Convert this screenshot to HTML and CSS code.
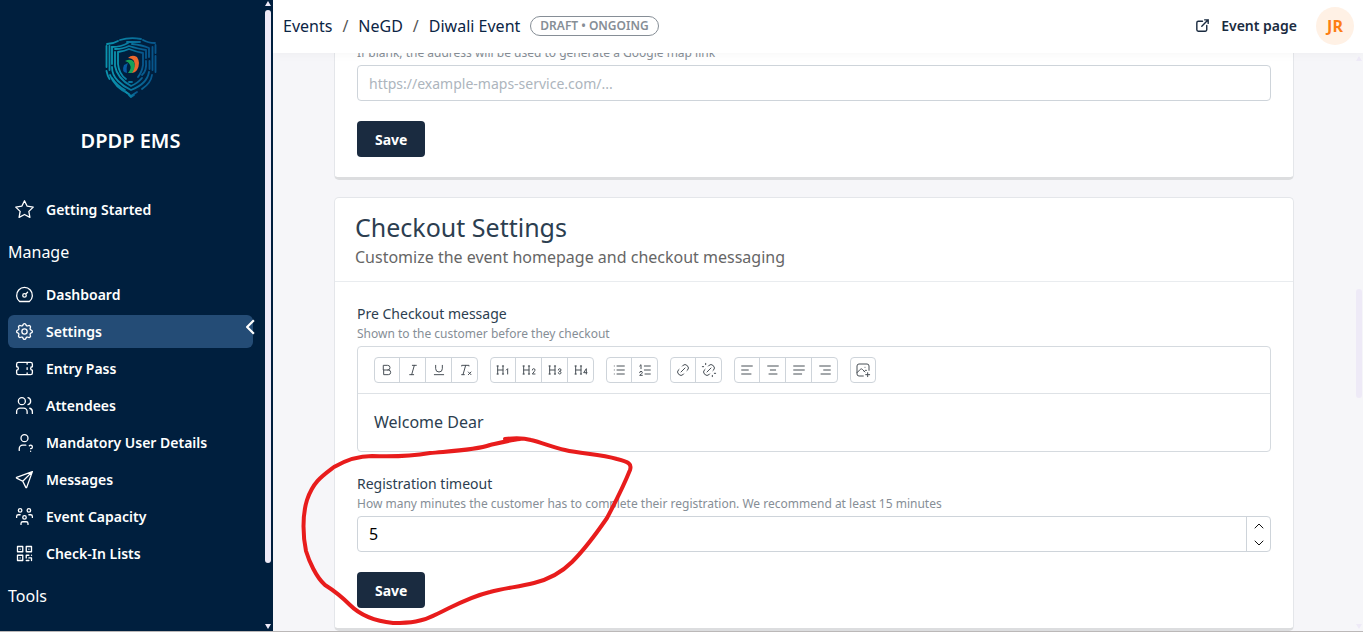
FILE: index.html
```html
<!DOCTYPE html>
<html lang="en">
<head>
<meta charset="utf-8">
<title>DPDP EMS – Event settings</title>
<link rel="stylesheet" href="styles.css">
</head>
<body>
<div class="app">
  <aside class="sidebar">
    <div class="sidebar-inner">
      <div class="brand">
        <svg class="brand-logo" viewBox="0 0 52 62" fill="none" stroke-linecap="round">
          <defs><linearGradient id="shield" x1="0" x2="1" y1="0" y2="0"><stop offset="0" stop-color="#0b93ae"/><stop offset="1" stop-color="#07568c"/></linearGradient></defs>
          <g stroke="url(#shield)" stroke-width="1.8">
            <path d="M15 3q10-3 21-1M22 5h13M38 3q5 3 12 3M2 7q6 0 11-3"/>
            <path d="M1.500 9v21M1.500 34q1 5 3 8M50.500 8v8M50.500 19v16M4.500 9v24"/>
            <path d="M5 38q5 13 19 19M7 41q5 8 13 12M37 52q9-6 10-14"/>
            <path d="M7 10v17M7 30q0 8 6 14 6 6 13 9 16-6 18-18M47.500 10v23"/>
            <path d="M7 10q9 0 16-4M27 7q10 1 17 4v9M44.500 24v8"/>
            <path d="M10 12q8 0 14-3 10 3 17 4v8M10 15v14q2 12 16 20 7-3 11-8M41 24q1 10-4 14"/>
            <path d="M13 15q7-1 11-3 8 3 14 4v12q-1 7-5 12M13 15v12q1 10 8 15M24 45h3"/>
            <path d="M21 55l5 4 6-4M24 58l2 2 3-2"/>
          </g>
          <path d="M23 21q4-4 9-1 4 6 0 13-2 3-6 3 5-6 3-12-2-3-6-3z" fill="#ed672d"/>
          <path d="M20 24q6-3 9 1 2 6-2 11l-4 0q4-5 2-8-1-3-5-4z" fill="#17a05a"/>
          <path d="M19 28l4-2q-2 4-1 10-6-1-3-8z" fill="#075aa3"/>
        </svg>
        <div class="brand-name">DPDP EMS</div>
      </div>
      <nav class="nav">
        <a class="nav-link nav-link-first" href="#start"><svg class="icon" viewBox="0 0 24 24"><path d="M12 17.750l-6.172 3.245l1.179 -6.873l-5 -4.867l6.900 -1l3.086 -6.253l3.086 6.253l6.900 1l-5 4.867l1.179 6.873z"/></svg>Getting Started</a>
        <h2 class="nav-heading">Manage</h2>
        <a class="nav-link" href="#dashboard"><svg class="icon" viewBox="0 0 24 24"><path d="M12 13m-2 0a2 2 0 1 0 4 0a2 2 0 1 0 -4 0M13.450 11.550l2.050 -2.050M6.400 20a9 9 0 1 1 11.200 0z"/></svg>Dashboard</a>
        <a class="nav-link nav-link-active" href="#settings"><svg class="icon" viewBox="0 0 24 24"><path d="M10.325 4.317c.426 -1.756 2.924 -1.756 3.350 0a1.724 1.724 0 0 0 2.573 1.066c1.543 -.940 3.310 .826 2.370 2.370a1.724 1.724 0 0 0 1.065 2.572c1.756 .426 1.756 2.924 0 3.350a1.724 1.724 0 0 0 -1.066 2.573c.940 1.543 -.826 3.310 -2.370 2.370a1.724 1.724 0 0 0 -2.572 1.065c-.426 1.756 -2.924 1.756 -3.350 0a1.724 1.724 0 0 0 -2.573 -1.066c-1.543 .940 -3.310 -.826 -2.370 -2.370a1.724 1.724 0 0 0 -1.065 -2.572c-1.756 -.426 -1.756 -2.924 0 -3.350a1.724 1.724 0 0 0 1.066 -2.573c-.940 -1.543 .826 -3.310 2.370 -2.370c1 .608 2.296 .070 2.572 -1.065zM9 12a3 3 0 1 0 6 0a3 3 0 0 0 -6 0"/></svg>Settings</a>
        <a class="nav-link" href="#pass"><svg class="icon" viewBox="0 0 24 24"><path d="M15 5v2M15 11v2M15 17v2M5 5h14a2 2 0 0 1 2 2v3a2 2 0 0 0 0 4v3a2 2 0 0 1 -2 2h-14a2 2 0 0 1 -2 -2v-3a2 2 0 0 0 0 -4v-3a2 2 0 0 1 2 -2"/></svg>Entry Pass</a>
        <a class="nav-link" href="#attendees"><svg class="icon" viewBox="0 0 24 24"><path d="M5 7a4 4 0 1 0 8 0a4 4 0 1 0 -8 0M3 21v-2a4 4 0 0 1 4 -4h4a4 4 0 0 1 4 4v2M16 3.130a4 4 0 0 1 0 7.750M21 21v-2a4 4 0 0 0 -3 -3.850"/></svg>Attendees</a>
        <a class="nav-link" href="#details"><svg class="icon" viewBox="0 0 24 24"><path d="M8 7a4 4 0 1 0 8 0a4 4 0 0 0 -8 0M6 21v-2a4 4 0 0 1 4 -4h3.500M19 22v.010M19 19a2.003 2.003 0 0 0 .914 -3.782a1.980 1.980 0 0 0 -2.414 .483"/></svg>Mandatory User Details</a>
        <a class="nav-link" href="#messages"><svg class="icon" viewBox="0 0 24 24"><path d="M10 14l11 -11M21 3l-6.500 18a.550 .550 0 0 1 -1 0l-3.500 -7l-7 -3.500a.550 .550 0 0 1 0 -1l18 -6.500"/></svg>Messages</a>
        <a class="nav-link" href="#capacity"><svg class="icon" viewBox="0 0 24 24"><path d="M10 13a2 2 0 1 0 4 0a2 2 0 0 0 -4 0M8 21v-1a2 2 0 0 1 2 -2h4a2 2 0 0 1 2 2v1M15 5a2 2 0 1 0 4 0a2 2 0 0 0 -4 0M17 10h2a2 2 0 0 1 2 2v1M5 5a2 2 0 1 0 4 0a2 2 0 0 0 -4 0M3 13v-1a2 2 0 0 1 2 -2h2"/></svg>Event Capacity</a>
        <a class="nav-link" href="#checkin"><svg class="icon" viewBox="0 0 24 24"><path d="M4 4h6v6h-6zM7 17v.010M14 4h6v6h-6zM7 7v.010M4 14h6v6h-6zM17 7v.010M14 14h3M20 14v.010M14 14v3M14 20h3M17 17h3M20 17v3"/></svg>Check-In Lists</a>
        <h2 class="nav-heading">Tools</h2>
      </nav>
      <button class="collapse" type="button" aria-label="Collapse sidebar"><svg viewBox="0 0 8 14"><path d="M7 1L1 7l6 6"/></svg></button>
    </div>
    <div class="rail" aria-hidden="true"><i class="rail-up"></i><i class="rail-thumb"></i><i class="rail-down"></i></div>
  </aside>

  <div class="page">
    <header class="topbar">
      <nav class="crumbs" aria-label="Breadcrumb">
        <a href="#events">Events</a><span>/</span><a href="#negd">NeGD</a><span>/</span><a href="#diwali">Diwali Event</a>
        <button class="status" type="button">DRAFT • ONGOING</button>
      </nav>
      <div class="account">
        <a class="event-link" href="#page"><svg class="icon" viewBox="0 0 24 24"><path d="M12 6h-6a2 2 0 0 0 -2 2v10a2 2 0 0 0 2 2h10a2 2 0 0 0 2 -2v-6M11 13l9 -9M15 4h5v5"/></svg>Event page</a>
        <button class="avatar" type="button">JR</button>
      </div>
    </header>

    <main class="content">
      <form class="card">
        <div class="card-body">
          <label class="hint" for="maps">If blank, the address will be used to generate a Google map link</label>
          <input class="field" id="maps" type="url" placeholder="https://example-maps-service.com/...">
          <button class="save" type="button">Save</button>
        </div>
      </form>

      <form class="card">
        <div class="card-head">
          <h1>Checkout Settings</h1>
          <p>Customize the event homepage and checkout messaging</p>
        </div>
        <div class="card-body">
          <div class="label" id="pre">Pre Checkout message</div>
          <div class="hint">Shown to the customer before they checkout</div>
          <div class="editor">
            <div class="toolbar">
              <div class="tools">
                <button type="button" aria-label="Bold"><svg viewBox="0 0 24 24"><path d="M7 5h6a3.500 3.500 0 0 1 0 7h-6zM13 12h1a3.500 3.500 0 0 1 0 7h-7v-7"/></svg></button>
                <button type="button" aria-label="Italic"><svg viewBox="0 0 24 24"><path d="M11 5h6M7 19h6M14 5l-4 14"/></svg></button>
                <button type="button" aria-label="Underline"><svg viewBox="0 0 24 24"><path d="M7 5v5a5 5 0 0 0 10 0v-5M5 19h14"/></svg></button>
                <button type="button" aria-label="Clear formatting"><svg viewBox="0 0 24 24"><path d="M17 15l4 4m0 -4l-4 4M7 6v-1h11v1M7 19h4M13 5l-4 14"/></svg></button>
              </div>
              <div class="tools">
                <button type="button" aria-label="Heading 1"><svg viewBox="0 0 24 24"><path d="M19 18v-8l-2 2M4 6v12M12 6v12M11 18h2M3 18h2M4 12h8M3 6h2M11 6h2"/></svg></button>
                <button type="button" aria-label="Heading 2"><svg viewBox="0 0 24 24"><path d="M17 12a2 2 0 1 1 4 0c0 .591 -.417 1.318 -.816 1.858l-3.184 4.143h4M4 6v12M12 6v12M11 18h2M3 18h2M4 12h8M3 6h2M11 6h2"/></svg></button>
                <button type="button" aria-label="Heading 3"><svg viewBox="0 0 24 24"><path d="M19 14a2 2 0 1 0 -2 -2M17 16a2 2 0 1 0 2 -2M4 6v12M12 6v12M11 18h2M3 18h2M4 12h8M3 6h2M11 6h2"/></svg></button>
                <button type="button" aria-label="Heading 4"><svg viewBox="0 0 24 24"><path d="M20 18v-8l-4 6h5M4 6v12M12 6v12M11 18h2M3 18h2M4 12h8M3 6h2M11 6h2"/></svg></button>
              </div>
              <div class="tools">
                <button type="button" aria-label="Bullet list"><svg viewBox="0 0 24 24"><path d="M9 6h11M9 12h11M9 18h11M5 6v.010M5 12v.010M5 18v.010"/></svg></button>
                <button type="button" aria-label="Numbered list"><svg viewBox="0 0 24 24"><path d="M11 6h9M11 12h9M12 18h8M4 16a2 2 0 1 1 4 0c0 .591 -.500 1 -1 1.500l-3 2.500h4M6 10v-6l-2 2"/></svg></button>
              </div>
              <div class="tools">
                <button type="button" aria-label="Link"><svg viewBox="0 0 24 24"><path d="M9 15l6 -6M11 6l.463 -.536a5 5 0 0 1 7.071 7.072l-.534 .464M13 18l-.397 .534a5.068 5.068 0 0 1 -7.127 0a4.972 4.972 0 0 1 0 -7.071l.524 -.463"/></svg></button>
                <button type="button" aria-label="Remove link"><svg viewBox="0 0 24 24"><path d="M17 22v-2M9 15l6 -6M11 6l.463 -.536a5 5 0 0 1 7.071 7.072l-.534 .464M13 18l-.397 .534a5.068 5.068 0 0 1 -7.127 0a4.972 4.972 0 0 1 0 -7.071l.524 -.463M20 17h2M2 7h2M7 2v2"/></svg></button>
              </div>
              <div class="tools">
                <button type="button" aria-label="Align left"><svg viewBox="0 0 24 24"><path d="M4 6h16M4 12h10M4 18h14"/></svg></button>
                <button type="button" aria-label="Align center"><svg viewBox="0 0 24 24"><path d="M4 6h16M8 12h8M6 18h12"/></svg></button>
                <button type="button" aria-label="Justify"><svg viewBox="0 0 24 24"><path d="M4 6h16M4 12h16M4 18h12"/></svg></button>
                <button type="button" aria-label="Align right"><svg viewBox="0 0 24 24"><path d="M4 6h16M10 12h10M6 18h14"/></svg></button>
              </div>
              <div class="tools">
                <button type="button" aria-label="Insert image"><svg viewBox="0 0 24 24"><path d="M15 8h.010M12.500 21h-6.500a3 3 0 0 1 -3 -3v-12a3 3 0 0 1 3 -3h12a3 3 0 0 1 3 3v6.500M3 16l5 -5c.928 -.893 2.072 -.893 3 0l4 4M14 14l1 -1c.670 -.644 1.450 -.824 2.182 -.540M16 19h6M19 16v6"/></svg></button>
              </div>
            </div>
            <div class="editor-text" contenteditable="true" role="textbox" aria-labelledby="pre">Welcome Dear</div>
          </div>
          <label class="label label-next" for="timeout">Registration timeout</label>
          <div class="hint">How many minutes the customer has to complete their registration. We recommend at least 15 minutes</div>
          <div class="stepper">
            <input class="field" id="timeout" type="text" inputmode="numeric" value="5">
            <div class="steps">
              <button type="button" aria-label="Increase"><svg viewBox="0 0 10 6"><path d="M1 5l4-4 4 4"/></svg></button>
              <button type="button" aria-label="Decrease"><svg viewBox="0 0 10 6"><path d="M1 1l4 4 4-4"/></svg></button>
            </div>
          </div>
          <button class="save" type="button">Save</button>
        </div>
      </form>
    </main>
    <div class="rail rail-page" aria-hidden="true"><i class="rail-up"></i><i class="rail-thumb"></i><i class="rail-down"></i></div>
    <svg class="marker" viewBox="0 0 334 192" aria-hidden="true"><path d="M205 6C214 5 224 5 231 7C243 10 252 14 265 17C282 21 300 21 317 26C329 29 332 31 330 37C324 52 316 68 307 85C296 101 286 115 272 129C262 139 250 146 234 150C218 154 205 155 190 159C169 164 154 173 137 181C122 189 110 190 93 190C74 188 60 182 50 172C40 162 33 157 25 152C16 144 9 128 6 118C3 104 2 83 7 67C13 49 22 43 34 34C46 27 60 23 72 23C96 24 112 23 130 20C152 18 176 17 190 12C203 9 211 7 220 6"/></svg>
  </div>
</div>
</body>
</html>
```

FILE: styles.css
```css
* { box-sizing: border-box; }

body {
  margin: 0;
  font-family: "Noto Sans", "Open Sans", sans-serif;
  font-size: 16px;
  color: #2c3e50;
}

button, input { font: inherit; }
button { cursor: pointer; padding: 0; background: none; border: 0; }
a { color: inherit; text-decoration: none; }
h1, h2, p { margin: 0; font-weight: 400; }
svg { fill: none; stroke: currentColor; stroke-linecap: round; stroke-linejoin: round; }

.app {
  display: flex;
  height: 100vh;
  overflow: hidden;
  border-bottom: 1px solid #bbb8b8;
}

/* Sidebar */
.sidebar {
  flex: 0 0 273px;
  display: flex;
  background: #001f3e;
  color: #fff;
}
.sidebar-inner { flex: 1; position: relative; padding: 0 12px 0 8px; overflow: hidden; }
.brand { display: flex; flex-direction: column; align-items: center; padding-top: 37px; gap: 30px; }
.brand-logo { width: 52px; height: 62px; stroke: none; }
.brand-name { font-size: 20px; line-height: 24px; font-weight: 600; }
.nav { display: flex; flex-direction: column; gap: 4px; padding-top: 40px; }
.nav-link {
  display: flex;
  align-items: center;
  gap: 11px;
  height: 33px;
  padding: 0 6px;
  border-radius: 6px;
  font-size: 14px;
  font-weight: 600;
}
.nav-link .icon { width: 21px; height: 21px; stroke-width: 1.500; }
.nav-link-active { background: #244c76; }
.nav-heading { font-size: 16px; line-height: 24px; padding: 10px 0; }
.collapse { position: absolute; right: 9px; top: 318px; width: 10px; height: 18px; color: #fff; }
.collapse svg { display: block; width: 9px; height: 16px; stroke-width: 2; stroke-linecap: butt; }

/* Scroll rails */
.rail { flex: 0 0 8px; display: flex; flex-direction: column; align-items: center; padding: 1px 2px 2px 0; color: #eeeaf7; }
.rail i { flex: none; width: 6px; }
.rail-up { border: 3px solid transparent; border-top: 0; border-bottom: 5px solid currentColor; }
.rail-down { border: 3px solid transparent; border-bottom: 0; border-top: 5px solid currentColor; margin-top: auto; }
.rail .rail-thumb { width: 6px; height: 88%; margin-top: 4px; border-radius: 3px; background: currentColor; }
.rail-page { position: absolute; right: 0; top: 53px; bottom: 0; width: 8px; color: #eeeaf7; padding-right: 0; padding-top: 3px; }
.rail-page .rail-thumb { height: 19%; margin-top: 228px; }

/* Page */
.page { flex: 1; min-width: 0; position: relative; background: #f6f6f9; overflow: hidden; }
.topbar {
  position: absolute;
  z-index: 2;
  inset: 0 0 auto 0;
  height: 53px;
  display: flex;
  align-items: center;
  justify-content: space-between;
  padding: 0 9px 2px 10px;
  background: #fff;
  box-shadow: 0 1px 10px rgba(0, 0, 0, 0.04);
}
.crumbs { display: flex; align-items: center; gap: 10px; color: #0b2545; font-size: 16px; }
.crumbs span { color: #555; }
.status {
  height: 20px;
  padding: 0 9px;
  border: 1px solid #868e96;
  border-radius: 10px;
  color: #868e96;
  font-size: 12px;
  line-height: 18px;
  font-weight: 600;
}
.account { display: flex; align-items: center; gap: 19px; }
.event-link { display: flex; align-items: center; gap: 10px; color: #1a2b40; font-size: 14px; font-weight: 600; }
.event-link .icon { width: 17px; height: 17px; stroke-width: 2; }
.avatar { width: 38px; height: 38px; border-radius: 50%; background: #fff1e5; color: #fd7e14; font-size: 16px; font-weight: 700; }

.content { padding: 20px 8px 0 0; display: flex; flex-direction: column; gap: 17px; }
.card {
  width: calc(100% - 40px);
  max-width: 960px;
  margin: 0 auto;
  background: #fff;
  border: 1px solid #e4e6ea;
  border-bottom: 3px solid #dcdddf;
  border-radius: 5px;
}
.card-head { padding: 12px 20px 11px; border-bottom: 1px solid #e9ecef; }
.card-head h1 { font-size: 25px; line-height: 34px; color: #2c3e50; }
.card-head p { font-size: 16px; line-height: 26px; color: #666; }
.card-body { padding: 22px 22px 20px; }
.label { display: block; font-size: 14px; line-height: 20px; color: #2c3e50; }
.label-next { margin-top: 22px; }
.hint { display: block; font-size: 12px; line-height: 20px; margin-bottom: 2px; color: #868e96; }
.field {
  display: block;
  width: 100%;
  height: 36px;
  padding: 0 11px;
  border: 1px solid #ced4da;
  border-radius: 4px;
  background: #fff;
  color: #000;
  font-size: 14px;
}
.field::placeholder { color: #adb5bd; opacity: 1; }
.save {
  display: block;
  height: 36px;
  margin-top: 20px;
  padding: 0 18px;
  border-radius: 4px;
  background: #1a2b40;
  color: #fff;
  font-size: 14px;
  font-weight: 700;
}

/* Editor */
.editor { border: 1px solid #d5dadf; border-radius: 4px; }
.toolbar { display: flex; flex-wrap: wrap; gap: 12px; padding: 10px 16px; border-bottom: 1px solid #dee2e6; }
.tools { display: flex; border: 1px solid #ced4da; border-radius: 4px; }
.tools button { display: grid; place-items: center; width: 26px; height: 24px; color: #495057; }
.tools button + button { border-left: 1px solid #ced4da; }
.tools button:first-child { width: 24px; }
.tools svg { width: 16px; height: 16px; stroke-width: 1.500; }
.editor-text { padding: 16px; font-size: 16px; line-height: 25px; outline: 0; }

.stepper { position: relative; }
.stepper .field { font-size: 16px; }
.steps { position: absolute; inset: 1px 1px 1px auto; width: 24px; display: flex; flex-direction: column; border-left: 1px solid #ced4da; }
.steps button { flex: 1; display: grid; place-items: center; color: #111; }
.steps svg { width: 10px; height: 6px; }

/* Hand-drawn marker ring */
.marker { position: absolute; z-index: 3; left: 27px; top: 433px; width: 334px; height: 192px; color: #e81c1c; stroke-width: 4; pointer-events: none; overflow: visible; }
```
